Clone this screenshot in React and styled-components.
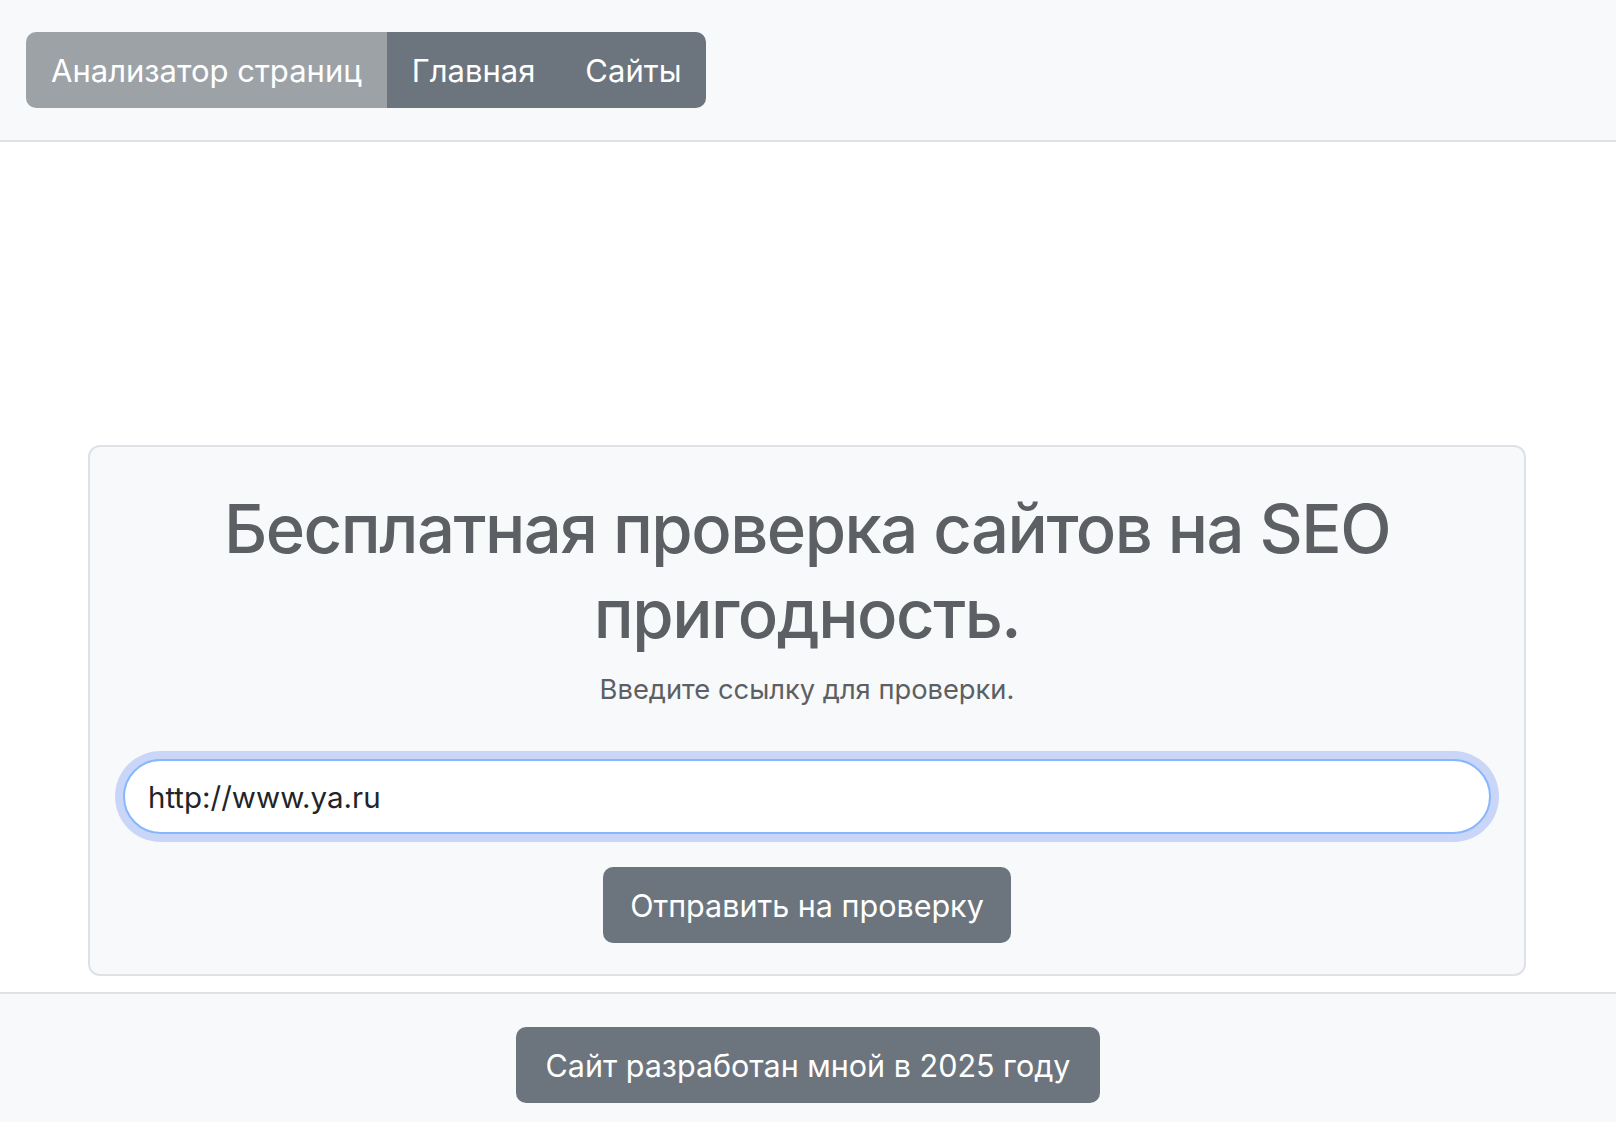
import React, { useEffect, useRef } from 'react'
import styled, { createGlobalStyle } from 'styled-components'

const GlobalStyle = createGlobalStyle`
  * {
    margin: 0;
    padding: 0;
    box-sizing: border-box;
  }

  body {
    background-color: #ffffff;
    color: #212529;
    font-family: Inter, "Noto Sans", sans-serif;
  }

  button {
    border: none;
    cursor: pointer;
    font-family: inherit;
  }
`

const Header = styled.header`
  background-color: #f8f9fa;
  height: 142px;
  border-bottom: 2px solid #dee2e6;
  display: flex;
  align-items: center;
  padding-left: 26px;
`

const NavGroup = styled.nav`
  display: flex;
  border-radius: 10px;
  overflow: hidden;
`

const NavButton = styled.button`
  height: 76px;
  padding: 0 25px;
  font-size: 31px;
  color: #ffffff;
  background-color: ${p => (p.$brand ? '#9da2a7' : '#6c757d')};
`

const Main = styled.main`
  padding: 303px 90px 16px 88px;
`

const Card = styled.section`
  background-color: #f8f9fa;
  border: 2px solid #dee2e6;
  border-radius: 12px;
  padding: 39px 33px 31px;
  display: flex;
  flex-direction: column;
  align-items: center;
`

const Title = styled.h1`
  font-size: 67px;
  font-weight: 500;
  letter-spacing: -1.5px;
  line-height: 85px;
  color: #5c5f63;
  text-align: center;
  margin-bottom: 14px;
`

const Lead = styled.p`
  font-size: 27.3px;
  line-height: 40px;
  color: #5c5f63;
  margin-bottom: 49px;
`

const UrlInput = styled.input`
  width: 100%;
  height: 75px;
  border: 2px solid #86b7fe;
  border-radius: 40px;
  padding: 0 23px;
  font-family: inherit;
  font-size: 29.5px;
  color: #212529;
  caret-color: #212529;
  background-color: #ffffff;
  box-shadow: 0 0 0 8px #c9d6f8;
  outline: none;
  margin-bottom: 33px;
`

const ActionButton = styled.button`
  height: 76px;
  padding: 0 ${p => (p.$wide ? '30px' : '27px')};
  font-size: 30.5px;
  color: #ffffff;
  background-color: #6c757d;
  border-radius: 10px;
`

const Footer = styled.footer`
  background-color: #f8f9fa;
  border-top: 2px solid #dee2e6;
  display: flex;
  justify-content: center;
  padding: 33px 0;
`

function App() {
  const inputRef = useRef(null)

  useEffect(() => {
    const el = inputRef.current
    if (el) {
      el.focus()
      el.setSelectionRange(el.value.length, el.value.length)
    }
  }, [])

  return (
    <div>
      <GlobalStyle />
      <Header>
        <NavGroup>
          <NavButton $brand>Анализатор страниц</NavButton>
          <NavButton>Главная</NavButton>
          <NavButton>Сайты</NavButton>
        </NavGroup>
      </Header>
      <Main>
        <Card>
          <Title>Бесплатная проверка сайтов на SEO пригодность.</Title>
          <Lead>Введите ссылку для проверки.</Lead>
          <UrlInput ref={inputRef} defaultValue="http://www.ya.ru" />
          <ActionButton>Отправить на проверку</ActionButton>
        </Card>
      </Main>
      <Footer>
        <ActionButton $wide>Сайт разработан мной в 2025 году</ActionButton>
      </Footer>
    </div>
  )
}

export default App
